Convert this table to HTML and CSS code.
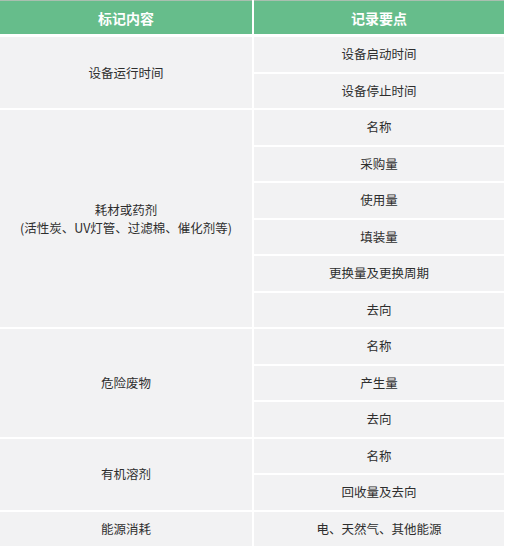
FILE: index.html
```html
<!DOCTYPE html>
<html lang="zh">
<head>
<meta charset="utf-8">
<link rel="stylesheet" href="styles.css">
</head>
<body>
<div class="table">
  <div class="head">标记内容</div>
  <div class="head">记录要点</div>

  <div class="left span2">设备运行时间</div>
  <div class="cell">设备启动时间</div>
  <div class="cell">设备停止时间</div>

  <div class="left span6"><div class="stack"><span>耗材或药剂</span><span>(活性炭、UV灯管、过滤棉、催化剂等)</span></div></div>
  <div class="cell">名称</div>
  <div class="cell">采购量</div>
  <div class="cell">使用量</div>
  <div class="cell">填装量</div>
  <div class="cell">更换量及更换周期</div>
  <div class="cell">去向</div>

  <div class="left span3">危险废物</div>
  <div class="cell">名称</div>
  <div class="cell">产生量</div>
  <div class="cell">去向</div>

  <div class="left span2">有机溶剂</div>
  <div class="cell">名称</div>
  <div class="cell">回收量及去向</div>

  <div class="left">能源消耗</div>
  <div class="cell">电、天然气、其他能源</div>
</div>
</body>
</html>
```
FILE: styles.css
```css
html, body {
  margin: 0;
  padding: 0;
  background: #ffffff;
}
body {
  font-family: "Noto Sans CJK SC", "Noto Sans", sans-serif;
  color: #2e2e2e;
  font-size: 12.5px;
}
.table {
  display: grid;
  grid-template-columns: 252px 250px;
  grid-template-rows: 35px;
  grid-auto-rows: 34.5px;
  column-gap: 2px;
  row-gap: 2px;
  width: 504px;
}
.head {
  background: #66bd8b;
  border-top: 1px solid #a9bfb0;
  color: #ffffff;
  font-weight: bold;
  font-size: 14px;
  display: flex;
  align-items: center;
  justify-content: center;
  box-sizing: border-box;
  height: 34px;
}
.left, .cell {
  background: #f2f2f3;
  display: flex;
  align-items: center;
  justify-content: center;
  text-align: center;
  line-height: 18px;
}
.stack {
  display: flex;
  flex-direction: column;
  align-items: center;
  line-height: 18px;
}
.left {
  grid-column: 1;
}
.cell {
  grid-column: 2;
}
.span2 { grid-row: span 2; }
.span3 { grid-row: span 3; }
.span6 { grid-row: span 6; }
```
